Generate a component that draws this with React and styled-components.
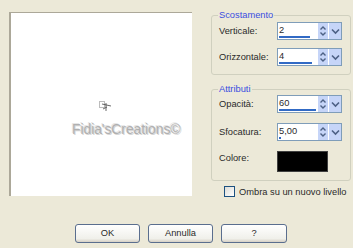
import React from "react";
import styled, { createGlobalStyle } from "styled-components";

const Global = createGlobalStyle`
  html, body { margin: 0; padding: 0; background: #ECE9D8; }
  body { font-family: "Liberation Sans", Arial, sans-serif; }
`;

const Page = styled.div`
  width: 353px;
  height: 248px;
  background: #ECE9D8;
  display: flex;
  flex-direction: column;
  font-family: "Liberation Sans", Arial, sans-serif;
  font-size: 9.3px;
  color: #2a2a2a;
  overflow: hidden;
`;

const Top = styled.div`
  display: flex;
  align-items: flex-start;
  padding-left: 9px;
`;

const Preview = styled.div`
  margin-top: 12px;
  width: 183px;
  height: 184px;
  background: #fff;
  border-top: 1px solid #ACA899;
  border-left: 2px solid #ACA899;
  display: flex;
  flex-direction: column;
  align-items: flex-start;
  padding: 87px 0 0 61px;
  box-sizing: border-box;
`;

const Stamp = styled.svg`
  margin-left: 26px;
  display: block;
`;

const Watermark = styled.div`
  margin-top: 9px;
  font-family: "Liberation Sans", Arial, sans-serif;
  font-size: 14px;
  letter-spacing: -0.1px;
  color: #b0b0b0;
  text-shadow: 1px 1px 0 #d6d6d6, -1px -1px 0 #e6e6e6;
  white-space: nowrap;
`;

const Side = styled.div`
  margin-left: 19px;
  margin-top: 10px;
  width: 140px;
  display: flex;
  flex-direction: column;
`;

const Group = styled.fieldset`
  margin: ${(p) => (p.$second ? "9px 0 0 0" : "0")};
  padding: 0;
  border: 1px solid #D0D0BF;
  border-radius: 3px;
  min-width: 0;
`;

const Legend = styled.legend`
  margin-left: 6px;
  padding: 0 1px;
  line-height: 11px;
  color: #3A4EE0;
`;

const Body = styled.div`
  display: flex;
  flex-direction: column;
  gap: ${(p) => p.$gap}px;
  padding: ${(p) => p.$top}px 8px 8px 7px;
`;

const Row = styled.div`
  display: flex;
  align-items: ${(p) => (p.$top ? "flex-start" : "center")};
`;

const Label = styled.span`
  width: 58px;
  flex: none;
  white-space: nowrap;
  padding-top: ${(p) => (p.$top ? 2 : 0)}px;
`;

const Spin = styled.div`
  width: 65px;
  height: 18px;
  box-sizing: border-box;
  border: 1px solid #7F9DB9;
  background: #fff;
  display: flex;
`;

const Field = styled.div`
  flex: 1;
  display: flex;
  flex-direction: column;
  padding-left: 1px;
`;

const Value = styled.span`
  line-height: 12px;
  padding-top: 1px;
`;

const Track = styled.div`
  margin-top: auto;
  margin-bottom: 1px;
  height: 3px;
`;

const Fill = styled.div`
  height: 100%;
  background: #316AC5;
`;

const Btn = styled.div`
  width: ${(p) => p.$w}px;
  flex: none;
  display: flex;
  align-items: center;
  justify-content: center;
  background: #C6D5F8;
  border-left: 1px solid #fff;
`;

const Swatch = styled.div`
  width: 51px;
  height: 21px;
  box-sizing: border-box;
  background: #000;
  border: 1px solid #404040;
`;

const CheckRow = styled.label`
  display: flex;
  align-items: center;
  gap: 4px;
  margin: 5px 0 0 13px;
  white-space: nowrap;
`;

const Box = styled.span`
  width: 11px;
  height: 11px;
  box-sizing: border-box;
  border: 1px solid #1C5180;
  background: linear-gradient(135deg, #DCDCD7, #fff);
`;

const Buttons = styled.div`
  margin-top: auto;
  padding: 0 0 5px 75px;
  display: flex;
  gap: 8px;
`;

const Button = styled.button`
  all: unset;
  width: ${(p) => p.$w}px;
  height: 19px;
  box-sizing: border-box;
  border: 1px solid #5A6E8E;
  border-radius: 3px;
  background: linear-gradient(#FFFFFF, #F0F0EA 80%, #D6D0C5);
  text-align: center;
  line-height: 17px;
  font-family: "Liberation Sans", Arial, sans-serif;
  font-size: 9.3px;
  color: #2a2a2a;
`;

const Arrows = () => (
  <svg width="8" height="12" viewBox="0 0 8 12">
    <path d="M1.5 4.5 L4 2 L6.5 4.5 M1.5 7.5 L4 10 L6.5 7.5" fill="none" stroke="#4D6185" strokeWidth="1.4" />
  </svg>
);

const Chevron = () => (
  <svg width="9" height="8" viewBox="0 0 9 8">
    <path d="M1 2.5 L4.5 6 L8 2.5" fill="none" stroke="#4D6185" strokeWidth="1.6" />
  </svg>
);

function SpinField({ value, fill }) {
  return (
    <Spin>
      <Field>
        <Value>{value}</Value>
        <Track>
          <Fill style={{ width: fill }} />
        </Track>
      </Field>
      <Btn $w={10}><Arrows /></Btn>
      <Btn $w={12}><Chevron /></Btn>
    </Spin>
  );
}

export default function App() {
  return (
    <Page>
      <Global />
      <Top>
        <Preview>
          <Stamp width="14" height="12" viewBox="0 0 14 12">
            <rect x="1.5" y="1.5" width="5" height="6" fill="none" stroke="#555" strokeWidth="0.8" strokeDasharray="1 1" />
            <path d="M4 4 L13 6 M8 3 L8 11 M5 9 L9 7" fill="none" stroke="#444" strokeWidth="0.8" />
          </Stamp>
          <Watermark>Fidia'sCreations©</Watermark>
        </Preview>
        <Side>
          <Group>
            <Legend>Scostamento</Legend>
            <Body $top={1} $gap={8}>
              <Row>
                <Label>Verticale:</Label>
                <SpinField value="2" fill={31} />
              </Row>
              <Row>
                <Label>Orizzontale:</Label>
                <SpinField value="4" fill={33} />
              </Row>
            </Body>
          </Group>
          <Group $second>
            <Legend>Attributi</Legend>
            <Body $top={0} $gap={10}>
              <Row>
                <Label>Opacità:</Label>
                <SpinField value="60" fill={37} />
              </Row>
              <Row>
                <Label>Sfocatura:</Label>
                <SpinField value="5,00" fill={2} />
              </Row>
              <Row $top>
                <Label $top>Colore:</Label>
                <Swatch />
              </Row>
            </Body>
          </Group>
          <CheckRow>
            <Box />
            Ombra su un nuovo livello
          </CheckRow>
        </Side>
      </Top>
      <Buttons>
        <Button $w={65}>OK</Button>
        <Button $w={65}>Annulla</Button>
        <Button $w={66}>?</Button>
      </Buttons>
    </Page>
  );
}
